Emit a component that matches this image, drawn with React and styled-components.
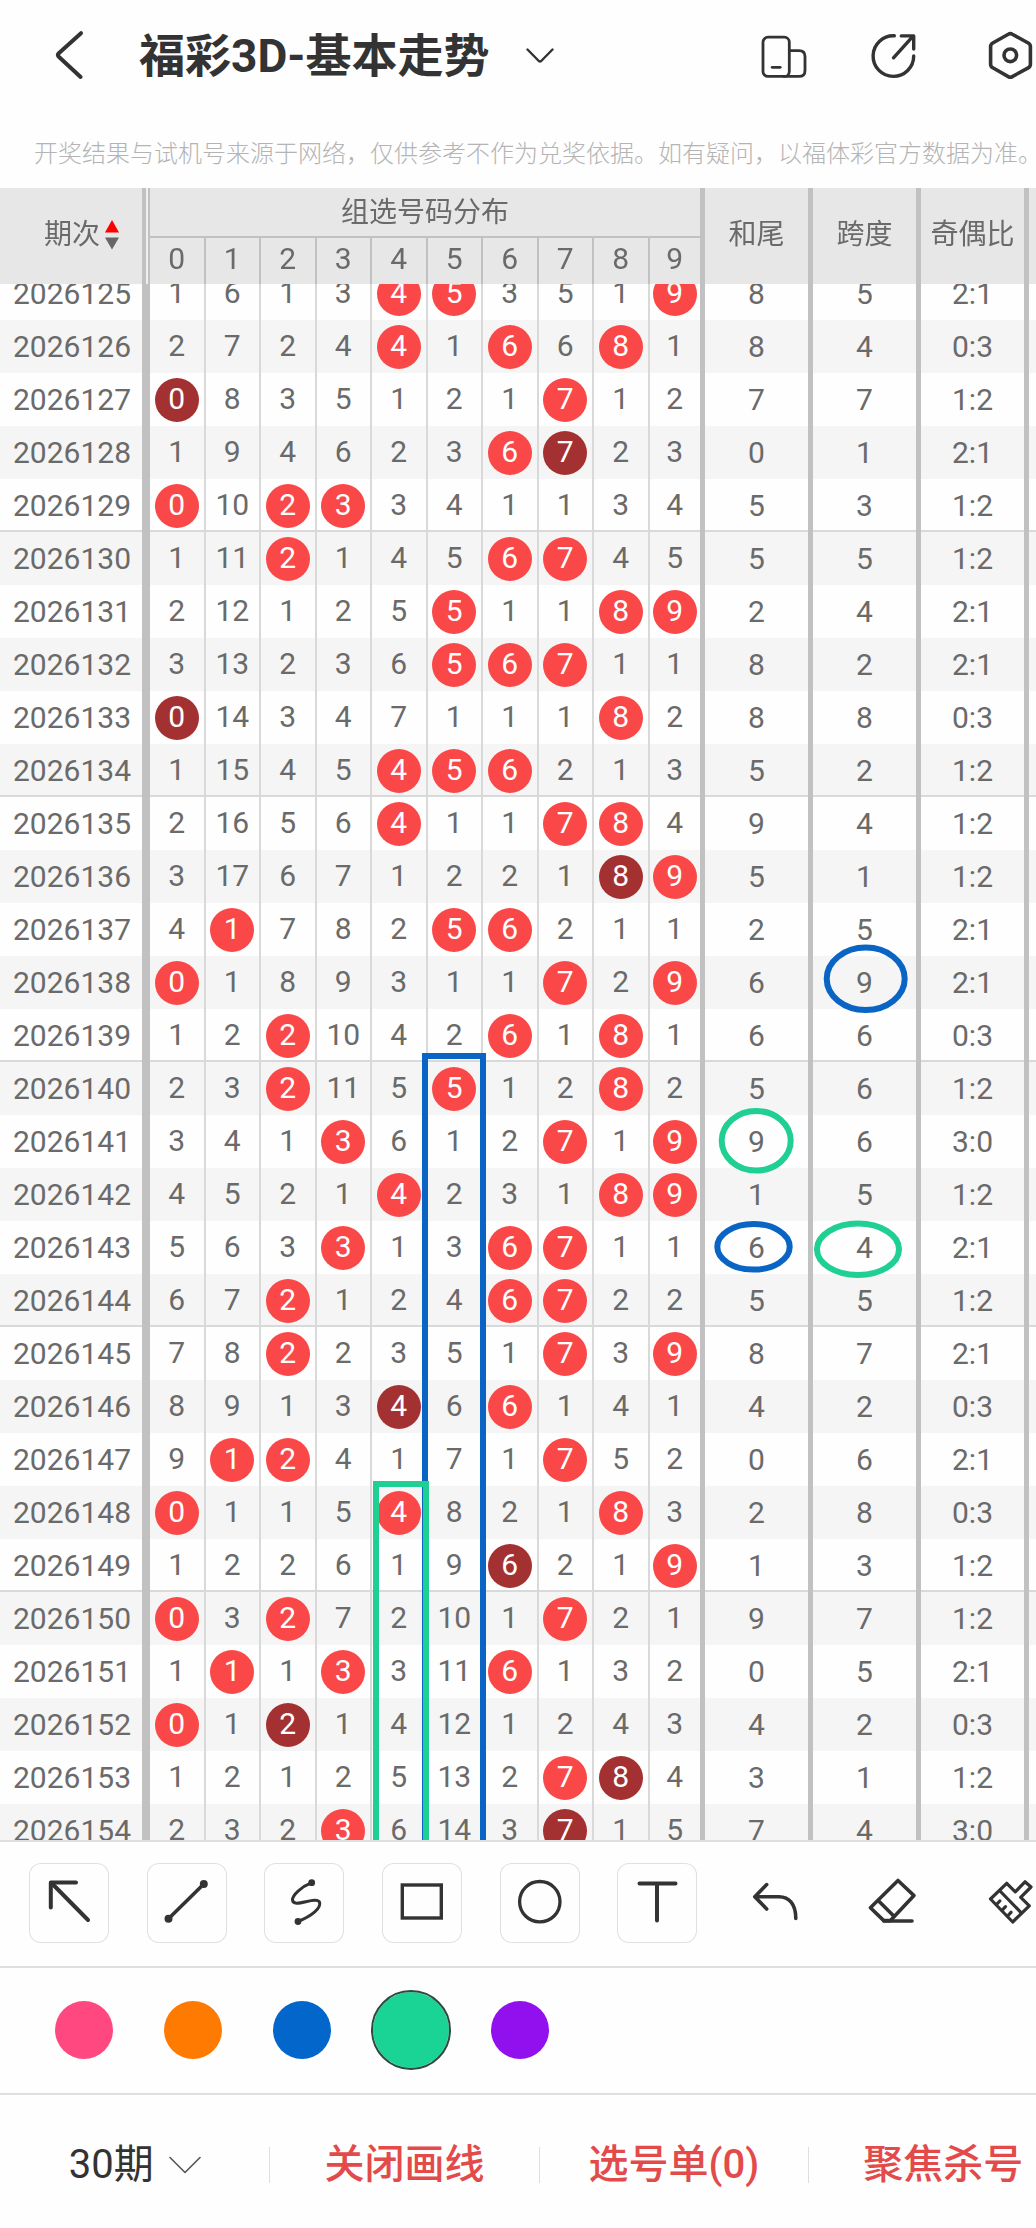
import React, { useLayoutEffect, useRef, useState } from 'react';
import styled, { createGlobalStyle } from 'styled-components';

// "*" : drawn number, "!" : number drawn twice
const rows = [
  ['2026125', '1 6 1 3 4* 5* 3 5 1 9*', '8', '5', '2:1'],
  ['2026126', '2 7 2 4 4* 1 6* 6 8* 1', '8', '4', '0:3'],
  ['2026127', '0! 8 3 5 1 2 1 7* 1 2', '7', '7', '1:2'],
  ['2026128', '1 9 4 6 2 3 6* 7! 2 3', '0', '1', '2:1'],
  ['2026129', '0* 10 2* 3* 3 4 1 1 3 4', '5', '3', '1:2'],
  ['2026130', '1 11 2* 1 4 5 6* 7* 4 5', '5', '5', '1:2'],
  ['2026131', '2 12 1 2 5 5* 1 1 8* 9*', '2', '4', '2:1'],
  ['2026132', '3 13 2 3 6 5* 6* 7* 1 1', '8', '2', '2:1'],
  ['2026133', '0! 14 3 4 7 1 1 1 8* 2', '8', '8', '0:3'],
  ['2026134', '1 15 4 5 4* 5* 6* 2 1 3', '5', '2', '1:2'],
  ['2026135', '2 16 5 6 4* 1 1 7* 8* 4', '9', '4', '1:2'],
  ['2026136', '3 17 6 7 1 2 2 1 8! 9*', '5', '1', '1:2'],
  ['2026137', '4 1* 7 8 2 5* 6* 2 1 1', '2', '5', '2:1'],
  ['2026138', '0* 1 8 9 3 1 1 7* 2 9*', '6', '9', '2:1'],
  ['2026139', '1 2 2* 10 4 2 6* 1 8* 1', '6', '6', '0:3'],
  ['2026140', '2 3 2* 11 5 5* 1 2 8* 2', '5', '6', '1:2'],
  ['2026141', '3 4 1 3* 6 1 2 7* 1 9*', '9', '6', '3:0'],
  ['2026142', '4 5 2 1 4* 2 3 1 8* 9*', '1', '5', '1:2'],
  ['2026143', '5 6 3 3* 1 3 6* 7* 1 1', '6', '4', '2:1'],
  ['2026144', '6 7 2* 1 2 4 6* 7* 2 2', '5', '5', '1:2'],
  ['2026145', '7 8 2* 2 3 5 1 7* 3 9*', '8', '7', '2:1'],
  ['2026146', '8 9 1 3 4! 6 6* 1 4 1', '4', '2', '0:3'],
  ['2026147', '9 1* 2* 4 1 7 1 7* 5 2', '0', '6', '2:1'],
  ['2026148', '0* 1 1 5 4* 8 2 1 8* 3', '2', '8', '0:3'],
  ['2026149', '1 2 2 6 1 9 6! 2 1 9*', '1', '3', '1:2'],
  ['2026150', '0* 3 2* 7 2 10 1 7* 2 1', '9', '7', '1:2'],
  ['2026151', '1 1* 1 3* 3 11 6* 1 3 2', '0', '5', '2:1'],
  ['2026152', '0* 1 2! 1 4 12 1 2 4 3', '4', '2', '0:3'],
  ['2026153', '1 2 1 2 5 13 2 7* 8! 4', '3', '1', '1:2'],
  ['2026154', '2 3 2 3* 6 14 3 7! 1 5', '7', '4', '3:0'],
];

const digits = [0, 1, 2, 3, 4, 5, 6, 7, 8, 9];
const colors = ['#ff4780', '#ff7a00', '#0266cb', '#19d494', '#9210ee'];
const BLUE = '#0a64c3';
const GREEN = '#20cf92';
const START_SCROLL = 17;

const tools = [
  {
    name: '箭头',
    boxed: true,
    icon: (
      <g strokeWidth='4'>
        <path d='M21.8 44.5V19.4H47' />
        <path d='M22.5 20L59 57' />
      </g>
    ),
  },
  {
    name: '直线',
    boxed: true,
    icon: (
      <g>
        <path strokeWidth='3.6' d='M21.5 55.8L56.8 21' />
        <circle cx='21.5' cy='55.8' r='4' fill='#333' stroke='none' />
        <circle cx='56.8' cy='21' r='4' fill='#333' stroke='none' />
      </g>
    ),
  },
  {
    name: '曲线',
    boxed: true,
    icon: (
      <g>
        <path
          strokeWidth='3'
          d='M47.7 19.7C37 24 28.5 32 28.5 36.8C28.5 46 52 32.5 55.5 39C57.5 45 48 53 34 58.5'
        />
        <circle cx='47.7' cy='19.7' r='3.4' fill='#333' stroke='none' />
        <circle cx='34' cy='58.5' r='3.4' fill='#333' stroke='none' />
      </g>
    ),
  },
  {
    name: '矩形',
    boxed: true,
    icon: (
      <rect x='20.3' y='22' width='39' height='33' strokeWidth='3.4' strokeLinejoin='miter' />
    ),
  },
  {
    name: '圆形',
    boxed: true,
    icon: <circle cx='39.8' cy='38.7' r='20.2' strokeWidth='3.3' />,
  },
  {
    name: '文字',
    boxed: true,
    icon: <path strokeWidth='4' d='M22.5 20.4H58.5M40 20.4V57.5' />,
  },
  {
    name: '撤销',
    icon: (
      <path
        strokeWidth='3.6'
        d='M31.7 21.6L19.8 33.7L31.7 46M20 33.7H44C54 33.7 60.8 41 60.8 55.5'
      />
    ),
  },
  {
    name: '橡皮',
    icon: (
      <g strokeWidth='3.6'>
        <path d='M46 17.5L62 32.6L38.5 57.6H31.8L18.4 44.7Z' />
        <path d='M26.4 37.8L41 52.3M31.8 58H60' />
      </g>
    ),
  },
  {
    name: '清空',
    icon: (
      <g strokeWidth='3.2'>
        <path d='M20.5 36L36.7 20.3L45.3 28.8L55 18.8L61 24L50.7 34.3L59.3 42.8L42.7 59Z' />
        <path d='M30.5 28.5L51.3 49.8M26.5 41.5L29.8 38M32 47.3L35.5 43.6M37.6 53L41 49.3' />
      </g>
    ),
  },
];

const App = () => {
  const scrollRef = useRef(null);
  const [color, setColor] = useState('#19d494');

  useLayoutEffect(() => {
    scrollRef.current.scrollTop = START_SCROLL;
  }, []);

  return (
    <>
      <GlobalStyle />
      <Wrap>
        <TitleBar>
          <IconButton aria-label='返回'>
            <svg width='56' height='56' viewBox='0 0 56 56'>
              <path strokeWidth='4' d='M41 5.2L18.5 25.5Q17.3 27 18.5 28.5L40.6 49' />
            </svg>
          </IconButton>
          <TitleButton>
            <h1>福彩3D-基本走势</h1>
            <svg width='28' height='16' viewBox='0 0 28 16'>
              <path strokeWidth='2.4' d='M1.5 1.5L12.8 13Q14 14 15.2 13L26.5 1.5' />
            </svg>
          </TitleButton>
          <Actions>
            <IconButton aria-label='横屏'>
              <svg width='56' height='56' viewBox='-6 -4 56 56'>
                <g strokeWidth='2.8'>
                  <rect x='3' y='5.2' width='26.3' height='39.2' rx='5' />
                  <path d='M29.3 18.6H39Q45 18.6 45 24.6V38.4Q45 44.4 39 44.4H24' />
                  <path d='M12.2 35.3H20.2' />
                </g>
              </svg>
            </IconButton>
            <IconButton aria-label='分享'>
              <svg width='56' height='56' viewBox='-2 -4 56 56'>
                <g strokeWidth='3.4'>
                  <path d='M25.3 3.8A20.3 20.3 0 1 0 44.7 24' />
                  <path d='M24.5 25.8L43.4 4.8M32.3 3.9H44.7V17' />
                </g>
              </svg>
            </IconButton>
            <IconButton aria-label='设置'>
              <svg width='56' height='56' viewBox='-6 -4 56 56'>
                <path
                  strokeWidth='3.6'
                  d='M22.3 2.2Q24.3 1 26.3 2.2L42.2 11Q44.4 12.2 44.4 14.6V32.2Q44.4 34.6 42.2 35.8L26.3 44.6Q24.3 45.8 22.3 44.6L6.8 35.8Q4.6 34.6 4.6 32.2V14.6Q4.6 12.2 6.8 11Z'
                />
                <circle cx='24.3' cy='23.3' r='6.3' strokeWidth='3.6' />
              </svg>
            </IconButton>
          </Actions>
        </TitleBar>
        <Notice>
          开奖结果与试机号来源于网络，仅供参考不作为兑奖依据。如有疑问，以福体彩官方数据为准。
        </Notice>

        <Scroller ref={scrollRef}>
          <Canvas>
            <Table>
              <colgroup>
                <IssueCol />
                {digits.map((d) => (
                  <col key={d} />
                ))}
                <StatCol />
                <StatCol />
                <StatCol />
                <EdgeCol />
              </colgroup>
              <thead>
                <tr>
                  <IssueHead rowSpan={2}>
                    <SortButton>
                      期次
                      <svg width='14' height='30' viewBox='0 0 14 30'>
                        <path d='M7 0L14 12.5H0Z' fill='#f00' stroke='none' />
                        <path d='M0 17.5H14L7 29.5Z' fill='#666' stroke='none' />
                      </svg>
                    </SortButton>
                  </IssueHead>
                  <GroupHead colSpan={10}>组选号码分布</GroupHead>
                  <StatHead rowSpan={2}>和尾</StatHead>
                  <StatHead rowSpan={2}>跨度</StatHead>
                  <StatHead rowSpan={2}>奇偶比</StatHead>
                  <EdgeHead rowSpan={2} />
                </tr>
                <tr>
                  {digits.map((d) => (
                    <DigitHead key={d} $last={d === 9}>
                      {d}
                    </DigitHead>
                  ))}
                </tr>
              </thead>
              <tbody>
                {rows.map(([issue, nums, tail, span, ratio], i) => (
                  <Row key={issue} $odd={i % 2 === 1} $groupEnd={i % 5 === 4}>
                    <IssueCell>{issue}</IssueCell>
                    {nums.split(' ').map((n, k) => (
                      <DigitCell key={k} $last={k === 9}>
                        <Ball $mark={n.slice(-1)}>{parseInt(n, 10)}</Ball>
                      </DigitCell>
                    ))}
                    <StatCell>{tail}</StatCell>
                    <StatCell>{span}</StatCell>
                    <StatCell>{ratio}</StatCell>
                    <td />
                  </Row>
                ))}
              </tbody>
            </Table>
            <Drawing>
              <rect x='425' y='885' width='58' height='900' stroke={BLUE} />
              <rect x='376' y='1313' width='50' height='500' stroke={GREEN} />
              <ellipse cx='865.7' cy='807.8' rx='39' ry='31.2' stroke={BLUE} />
              <ellipse cx='756.2' cy='969.8' rx='34.5' ry='29.8' stroke={GREEN} />
              <ellipse cx='753.5' cy='1075.8' rx='36.2' ry='22.8' stroke={BLUE} />
              <ellipse cx='858' cy='1078.3' rx='41' ry='25.7' stroke={GREEN} />
            </Drawing>
          </Canvas>
        </Scroller>

        <ToolBar>
          <ToolList>
            {tools.map((tool) => (
              <ToolButton key={tool.name} aria-label={tool.name} $boxed={tool.boxed}>
                <svg width='80' height='80' viewBox='0 0 80 80'>
                  {tool.icon}
                </svg>
              </ToolButton>
            ))}
          </ToolList>
        </ToolBar>

        <ColorBar>
          {colors.map((c) => (
            <Swatch
              key={c}
              type='radio'
              name='color'
              aria-label={c}
              $color={c}
              checked={color === c}
              onChange={() => setColor(c)}
            />
          ))}
        </ColorBar>

        <BottomBar>
          <PeriodLabel>
            <select aria-label='期数'>
              <option>30期</option>
            </select>
            <svg width='32' height='18' viewBox='0 0 32 18'>
              <path stroke='#555' strokeWidth='1.6' d='M1 1.5L16 16.5L31 1.5' />
            </svg>
          </PeriodLabel>
          <BottomButton>关闭画线</BottomButton>
          <BottomButton>选号单(0)</BottomButton>
          <BottomButton>聚焦杀号</BottomButton>
        </BottomBar>
      </Wrap>
    </>
  );
};

const GlobalStyle = createGlobalStyle`
  * {
    box-sizing: border-box;
  }
  body {
    margin: 0;
    background: #fefefe;
    color: #333;
    font-family: Roboto, 'Noto Sans CJK SC', sans-serif;
  }
  button, select {
    padding: 0;
    border: none;
    background: none;
    color: inherit;
    font: inherit;
  }
  svg {
    display: block;
    flex: none;
    fill: none;
    stroke: #333;
    stroke-linecap: round;
    stroke-linejoin: round;
  }
`;
const Wrap = styled.div`
  display: flex;
  flex-direction: column;
  height: 100vh;
  overflow: hidden;
`;

const TitleBar = styled.header`
  display: flex;
  flex: none;
  align-items: center;
  height: 112px;
  padding-left: 40px;
`;
const IconButton = styled.button`
  display: flex;
`;
const TitleButton = styled.button`
  display: flex;
  align-items: center;
  gap: 37px;
  margin-left: 43px;
  h1 {
    margin: 0;
    font-size: 46px;
    line-height: 56px;
    font-weight: 700;
    white-space: nowrap;
  }
`;
const Actions = styled.div`
  display: flex;
  gap: 57px;
  margin-left: auto;
`;
const Notice = styled.p`
  flex: none;
  height: 76px;
  margin: 0;
  padding: 6px 0 0 34px;
  font-size: 24px;
  line-height: 72px;
  font-weight: 300;
  color: #b4b4b4;
  white-space: nowrap;
`;

const Scroller = styled.main`
  flex: 1;
  min-height: 0;
  overflow-y: auto;
  scrollbar-width: none;
`;
const Canvas = styled.div`
  position: relative;
`;
const Drawing = styled.svg`
  position: absolute;
  top: 0;
  left: 0;
  width: 100%;
  height: 100%;
  pointer-events: none;
  stroke-width: 6px;
  stroke-linejoin: miter;
`;
const Table = styled.table`
  width: 100%;
  table-layout: fixed;
  border-collapse: separate;
  border-spacing: 0;
  color: #6a6a6a;
  text-align: center;
  thead {
    position: sticky;
    top: 0;
    z-index: 1;
  }
  th,
  td {
    padding: 0;
    font-weight: 400;
  }
`;
const IssueCol = styled.col`
  width: 150px;
`;
const StatCol = styled.col`
  width: 108px;
`;
const EdgeCol = styled.col`
  width: 7px;
`;
const HeadCell = styled.th`
  background: #e7e7e7;
  font-size: 28px;
  line-height: 40px;
`;
const IssueHead = styled(HeadCell)`
  border-right: 2px solid #c1c1c1;
  box-shadow: inset -2px 0 #efefef, inset -6px 0 #c1c1c1;
`;
const SortButton = styled.button`
  display: flex;
  align-items: center;
  gap: 5px;
  margin: 0 0 2px 44px;
`;
const GroupHead = styled(HeadCell)`
  height: 50px;
  line-height: 48px;
  border-right: 5px solid #c1c1c1;
  box-shadow: inset 0 -2px #c1c1c1;
`;
const DigitHead = styled(HeadCell)`
  height: 46px;
  font-size: 30px;
  border-right: ${({ $last }) => ($last ? '5px' : '2px')} solid #c1c1c1;
  && {
    padding-bottom: 4px;
  }
`;
const StatHead = styled(HeadCell)`
  border-right: 5px solid #c1c1c1;
  white-space: nowrap;
  && {
    padding-bottom: 2px;
  }
`;
const EdgeHead = styled(HeadCell).attrs({ as: 'td' })``;

const Row = styled.tr`
  background: ${({ $odd }) => ($odd ? '#f5f5f5' : '#fefefe')};
  td {
    height: 53px;
    font-size: 30px;
    box-shadow: ${({ $groupEnd }) => ($groupEnd ? 'inset 0 -2px #d9d9d9' : 'none')};
  }
`;
const IssueCell = styled.td`
  border-right: 8px solid #c1c1c1;
  line-height: 50px;
  && {
    padding-left: 2px;
  }
`;
const DigitCell = styled.td`
  border-right: ${({ $last }) => ($last ? '5px solid #c1c1c1' : '2px solid #d9d9d9')};
`;
const StatCell = styled.td`
  border-right: 5px solid #c1c1c1;
  line-height: 50px;
`;
const Ball = styled.span`
  display: block;
  width: 44px;
  height: 44px;
  margin: 0 auto;
  border-radius: 50%;
  line-height: 42px;
  ${({ $mark }) => $mark === '*' && 'background: #fa4848; color: #fff;'}
  ${({ $mark }) => $mark === '!' && 'background: #a43131; color: #fff;'}
`;

const ToolBar = styled.div`
  flex: none;
  padding: 21px 0 23px;
  border-top: 2px solid #dfdfdf;
  overflow: hidden;
`;
const ToolList = styled.div`
  display: flex;
  justify-content: space-between;
  margin: 0 -14px 0 29px;
`;
const ToolButton = styled.button`
  flex: none;
  width: 80px;
  height: 80px;
  border-radius: 12px;
  box-shadow: ${({ $boxed }) => ($boxed ? 'inset 0 0 0 1px #e0e0e0' : 'none')};
`;
const ColorBar = styled.div`
  display: flex;
  flex: none;
  align-items: center;
  gap: 29px;
  height: 127px;
  padding: 0 0 2px 44px;
  border-top: 2px solid #dfdfdf;
`;
const Swatch = styled.input`
  appearance: none;
  width: 80px;
  height: 80px;
  margin: 0;
  border: 11px solid transparent;
  border-radius: 50%;
  background: ${({ $color }) => $color} padding-box;
  &:checked {
    border: 2px solid #2d4a40;
  }
`;

const BottomBar = styled.footer`
  display: flex;
  flex: none;
  align-items: center;
  height: 135px;
  padding-top: 6px;
  border-top: 2px solid #dfdfdf;
  font-size: 40px;
`;
const PeriodLabel = styled.label`
  display: flex;
  flex: none;
  align-items: center;
  justify-content: center;
  gap: 15px;
  width: 26%;
  select {
    appearance: none;
  }
`;
const BottomButton = styled.button`
  flex: none;
  width: 26%;
  height: 36px;
  border-left: 1px solid #dedede;
  color: #e34b4b;
  font-weight: 500;
  line-height: 36px;
  white-space: nowrap;
`;

export default App;
